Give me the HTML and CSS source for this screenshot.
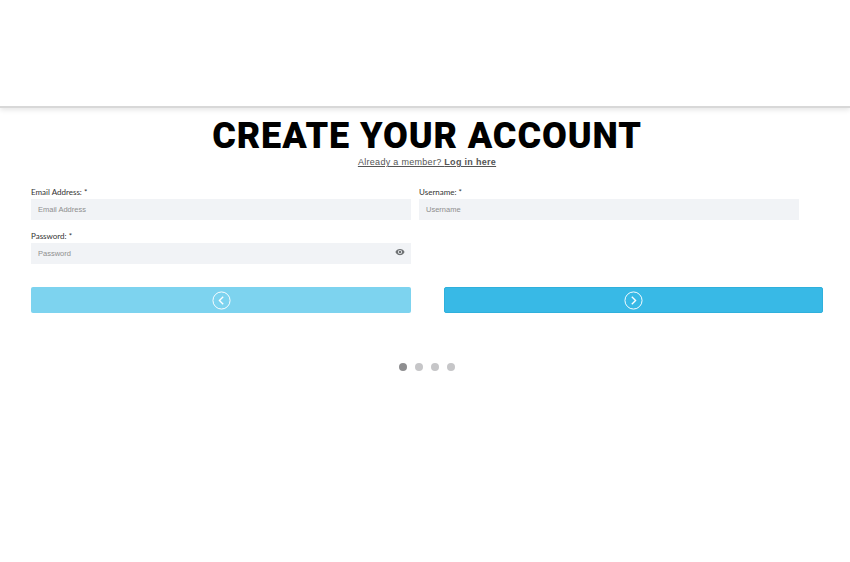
FILE: index.html
```html
<!DOCTYPE html>
<html lang="en">
<head>
<meta charset="UTF-8">
<meta name="viewport" content="width=device-width, initial-scale=1.0">
<title>Create Your Account</title>
<link rel="stylesheet" href="styles.css">
</head>
<body>

<header class="site-header"></header>

<main class="signup">
  <h1>CREATE YOUR ACCOUNT</h1>
  <p class="member-link"><a href="#">Already a member? <strong>Log in here</strong></a></p>

  <form class="fields">
    <div class="field">
      <label for="email">Email Address: *</label>
      <input type="text" id="email" placeholder="Email Address">
    </div>
    <div class="field">
      <label for="username">Username: *</label>
      <input type="text" id="username" placeholder="Username">
    </div>
    <div class="field password-field">
      <label for="password">Password: *</label>
      <input type="text" id="password" placeholder="Password">
      <svg class="eye" viewBox="0 0 24 24" width="10" height="10">
        <path fill="#6f7274" d="M12 4.5C7 4.5 2.7 7.6 1 12c1.700 4.400 6 7.500 11 7.500s9.300-3.100 11-7.500c-1.700-4.400-6-7.500-11-7.500zM12 17a5 5 0 1 1 0-10 5 5 0 0 1 0 10zm0-8a3 3 0 1 0 0 6 3 3 0 0 0 0-6z"/>
      </svg>
    </div>
  </form>

  <div class="nav-buttons">
    <button type="button" class="nav-btn prev">
      <svg viewBox="0 0 20 20" width="19" height="19">
        <circle cx="10" cy="10" r="9" fill="none" stroke="#fff" stroke-width="1"/>
        <path d="M11.800 6 L7.800 10 L11.800 14" fill="none" stroke="#fff" stroke-width="1.400"/>
      </svg>
    </button>
    <button type="button" class="nav-btn next">
      <svg viewBox="0 0 20 20" width="19" height="19">
        <circle cx="10" cy="10" r="9" fill="none" stroke="#fff" stroke-width="1"/>
        <path d="M8.200 6 L12.200 10 L8.200 14" fill="none" stroke="#fff" stroke-width="1.400"/>
      </svg>
    </button>
  </div>

  <div class="dots">
    <span class="dot active"></span>
    <span class="dot"></span>
    <span class="dot"></span>
    <span class="dot"></span>
  </div>
</main>

</body>
</html>
```

FILE: styles.css
```css
body {
  margin: 0;
  background: #fff;
  font-family: Roboto, sans-serif;
  color: #000;
}
.site-header {
  height: 106px;
  background: #fff;
  border-bottom: 2px solid #d8d8d8;
  box-shadow: 0 2px 5px rgba(0, 0, 0, 0.1);
}
.signup {
  padding: 0 27px 0 31px;
}
h1 {
  margin: 7px 0 0;
  font-size: 36px;
  line-height: 42px;
  font-weight: 900;
  letter-spacing: 0.9px;
  text-align: center;
  color: #000;
}
.member-link {
  margin: -1px 0 0;
  font-family: "Liberation Sans", sans-serif;
  font-size: 9px;
  line-height: 13px;
  letter-spacing: 0.3px;
  text-align: center;
}
.member-link a {
  color: #555;
  text-decoration: underline;
}
.fields {
  display: grid;
  grid-template-columns: 380px 380px;
  column-gap: 8px;
  row-gap: 11px;
  margin-top: 18px;
}
.field {
  display: flex;
  flex-direction: column;
}
.password-field {
  position: relative;
}
label {
  font-family: Lato, sans-serif;
  font-size: 8px;
  line-height: 10px;
  padding-bottom: 2px;
  color: #333;
}
input {
  height: 21px;
  border: none;
  padding: 0 7px;
  box-sizing: border-box;
  background: #f1f3f6;
  font-family: "Liberation Sans", sans-serif;
  font-size: 7.500px;
}
input::placeholder {
  color: #8f8f8f;
}
.eye {
  position: absolute;
  right: 6px;
  top: 16px;
}
.nav-buttons {
  display: flex;
  justify-content: space-between;
  margin-top: 23px;
}
.nav-btn {
  height: 26px;
  border: none;
  border-radius: 2px;
  padding: 0;
  display: flex;
  align-items: center;
  justify-content: center;
}
.prev {
  width: 380px;
  background: #7dd3ef;
}
.next {
  width: 379px;
  background: #38b9e6;
  border: 1px solid #2fb0dc;
  box-sizing: border-box;
}
.dots {
  display: flex;
  justify-content: center;
  gap: 8px;
  margin-top: 50px;
}
.dot {
  width: 8px;
  height: 8px;
  border-radius: 50%;
  background: #c6c6c8;
}
.dot.active {
  background: #8e8e90;
}
```
